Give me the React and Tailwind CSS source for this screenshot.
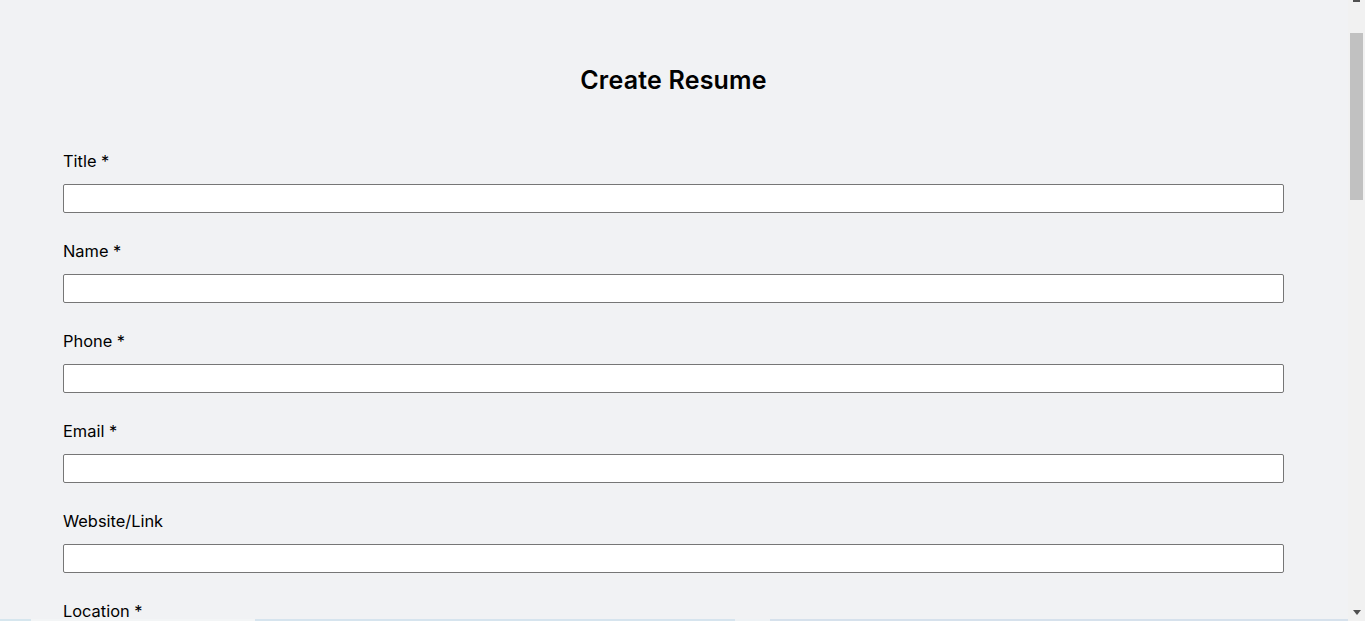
import React from 'react';

const fields = [
  { label: 'Title', required: true },
  { label: 'Name', required: true },
  { label: 'Phone', required: true },
  { label: 'Email', required: true },
  { label: 'Website/Link', required: false },
  { label: 'Location', required: true },
  { label: 'Summary', required: false },
];

const App = () => {
  return (
    <div className="h-[621px] w-full flex overflow-hidden bg-[#f1f2f4] font-['Inter','Noto_Sans',sans-serif] text-black">
      {/* Page content */}
      <div className="flex-1 flex flex-col overflow-hidden">
        <div className="flex-1 overflow-hidden">
          <div className="pl-[63px] pr-[64px] pt-[64px]">
            <h1 className="text-center text-[25px] leading-8 font-semibold tracking-[0.2px]">
              Create Resume
            </h1>

            <form className="mt-[53px] flex flex-col gap-[26px]">
              {fields.map((field) => (
                <div key={field.label} className="flex flex-col">
                  <label className="text-[16.4px] leading-6 mb-[11px]">
                    {field.label}
                    {field.required && ' *'}
                  </label>
                  <input
                    type="text"
                    className="h-[29px] w-full bg-white border border-[#767676] rounded-[2px] px-2 text-sm outline-none"
                  />
                </div>
              ))}
            </form>
          </div>
        </div>
        {/* Bottom strip */}
        <div className="h-[2px] flex shrink-0">
          <div className="w-[31px] bg-[#d6e6ee]" />
          <div className="w-[224px] bg-[#f3f5f6]" />
          <div className="w-[480px] bg-[#d6e4ee]" />
          <div className="w-[35px] bg-[#eef2f5]" />
          <div className="flex-1 bg-[#d6e1ec]" />
        </div>
      </div>

      {/* Scrollbar */}
      <div className="w-[17px] shrink-0 bg-[#f1f1f1] flex flex-col items-center">
        <div className="h-[33px] w-full flex justify-center">
          <div className="w-[7px] h-[2px] bg-[#505050] mt-0" />
        </div>
        <div className="w-[13px] h-[167px] bg-[#c1c1c1]" />
        <div className="flex-1" />
        <div className="h-[16px] w-full flex justify-center pt-[5px]">
          <svg width="8" height="5" viewBox="0 0 8 5">
            <path d="M0 0 H8 L4 5 Z" fill="#505050" />
          </svg>
        </div>
      </div>
    </div>
  );
};

export default App;
